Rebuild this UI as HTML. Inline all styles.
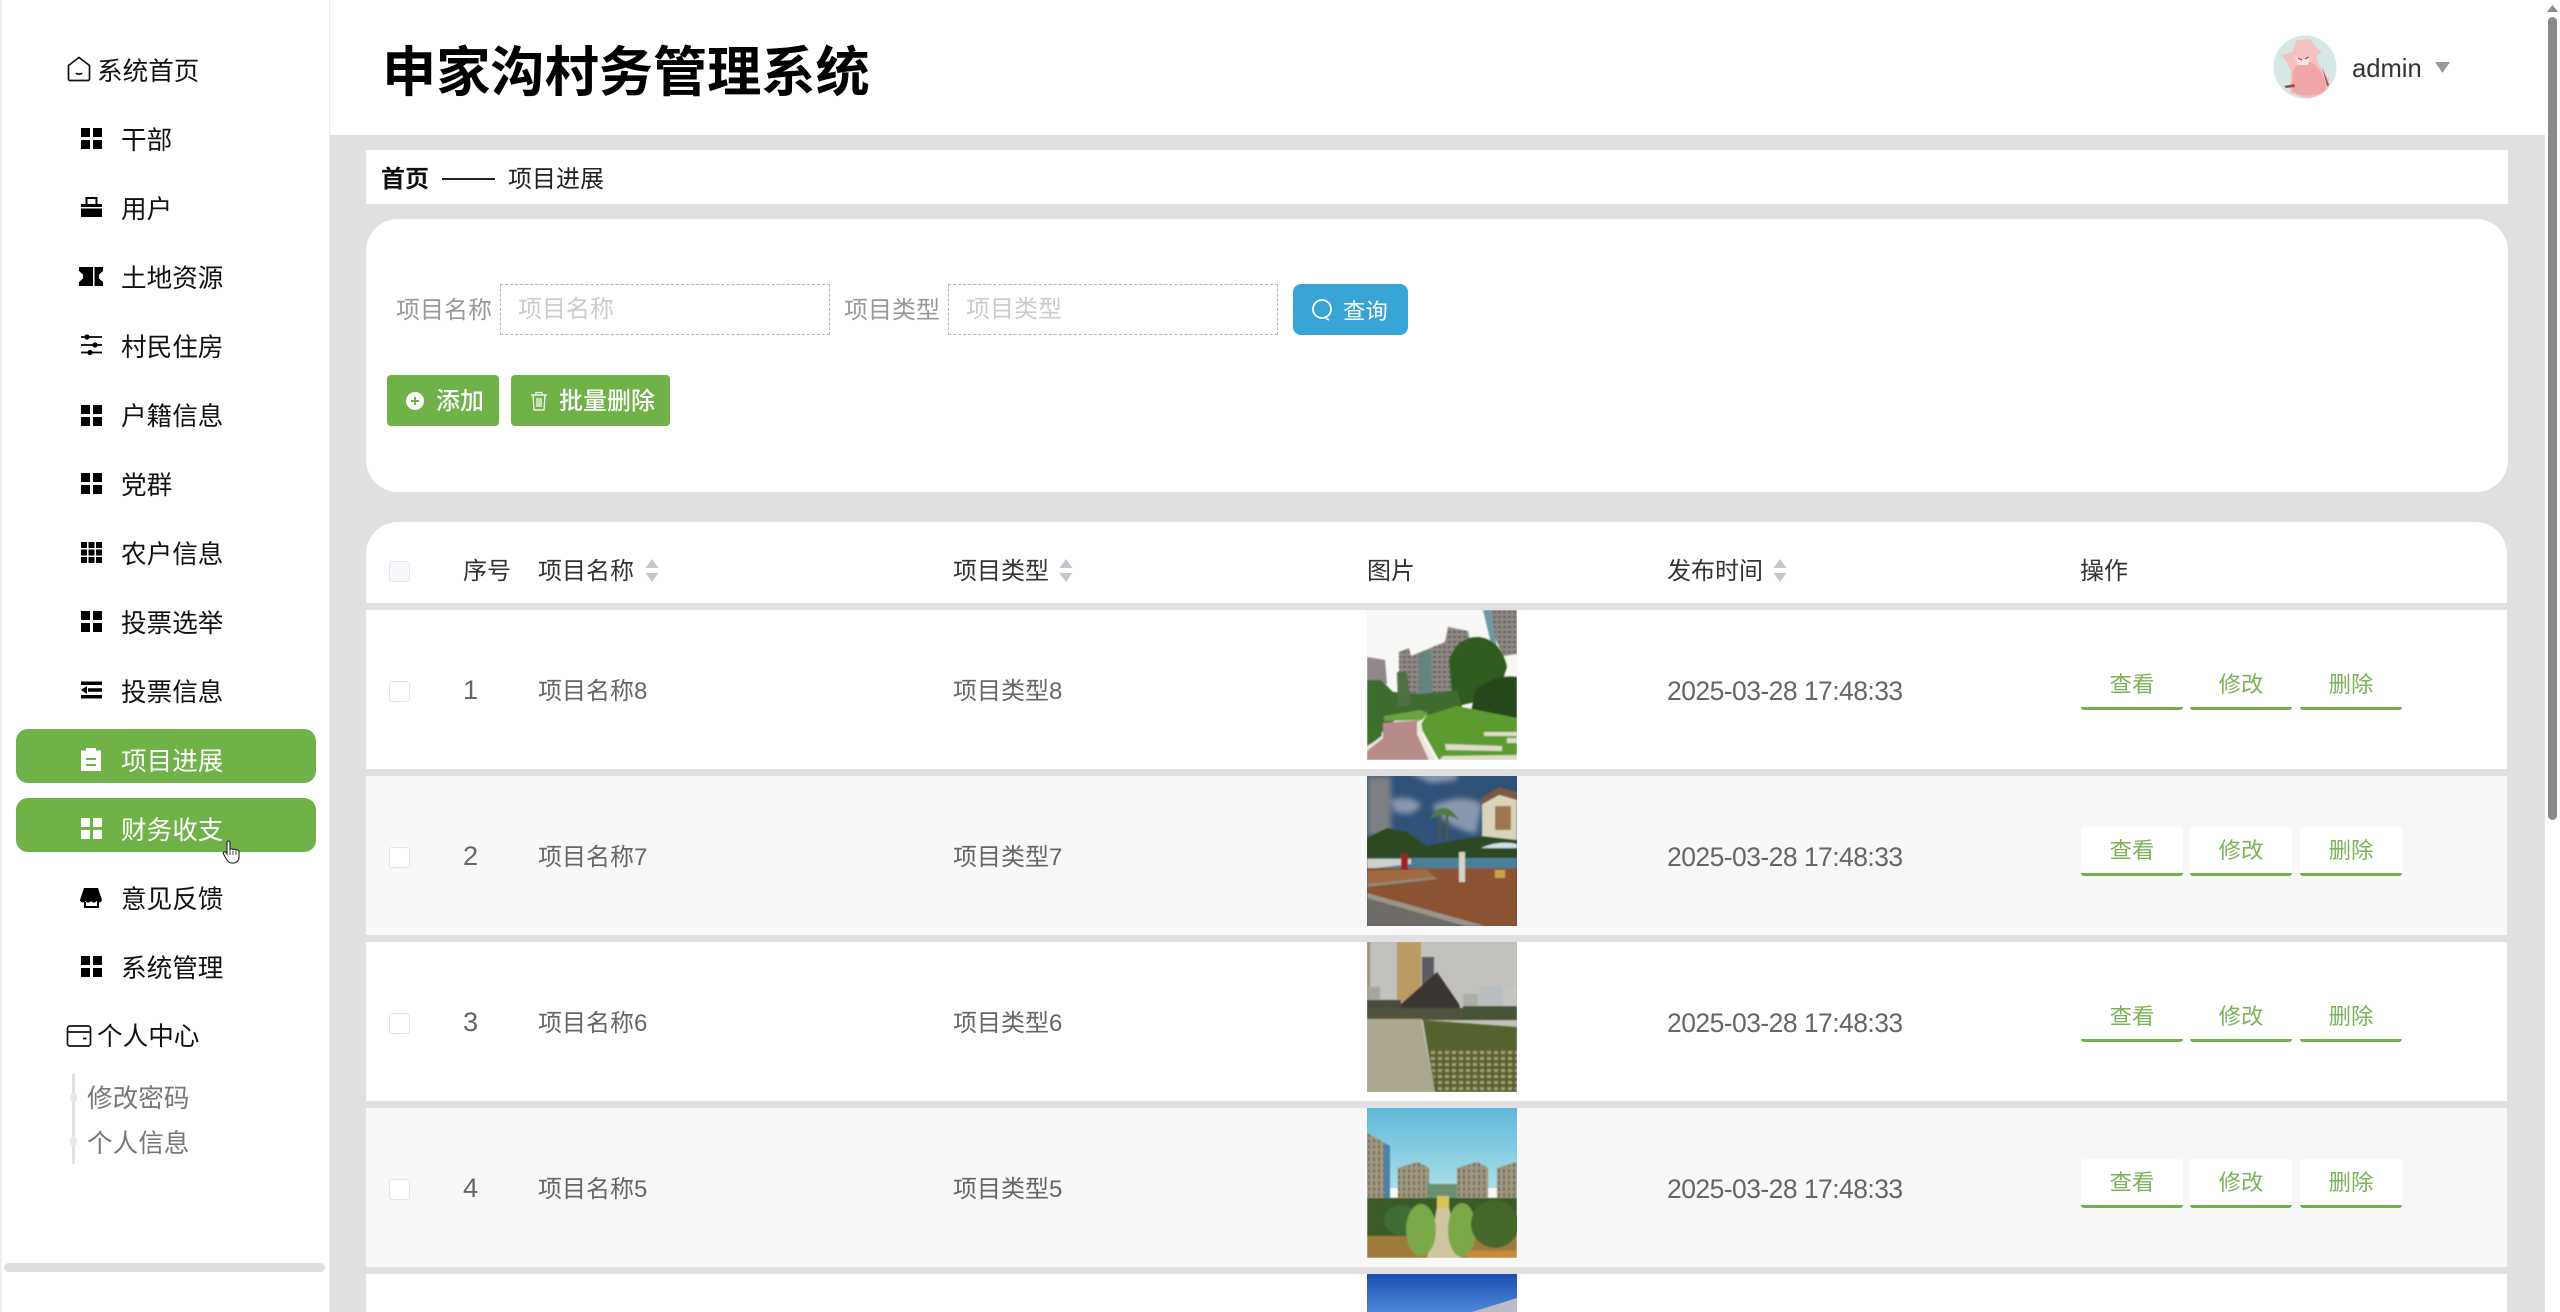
<!DOCTYPE html>
<html lang="zh">
<head>
<meta charset="utf-8">
<title>申家沟村务管理系统</title>
<style>
html,body{margin:0;padding:0;width:2560px;height:1312px;overflow:hidden;background:#e0e0e0}
body{position:relative;font-family:"Liberation Sans","Noto Sans CJK SC",sans-serif}
div,span,svg{position:absolute;box-sizing:border-box}
.t{white-space:nowrap;height:40px;line-height:40px;margin-top:2px}
.m{font-size:25.6px;color:#111}
.g{font-size:24px;color:#666}
.n{font-size:27.2px;color:#666}
.d{font-size:26.5px;letter-spacing:-.55px;color:#666;margin-top:.5px}
.h{font-size:24px;color:#333}
.w{left:366px;width:2141px;height:159px;background:#fff}
.alt{background:#f8f8f8}
.cb{left:389px;width:21px;height:21px;border:1.6px solid #e4e4e4;border-radius:3px;background:#fff}
.op{width:102px;height:49px;border-bottom:3.2px solid #72b04e;border-radius:3px;background:#fff;text-align:center;font-size:22.4px;line-height:48px;color:#7ab35a}
.icon{left:80px;width:22px;height:21px}
</style>
</head>
<body>
<!-- sidebar -->
<div style="left:0;top:0;width:330px;height:1312px;background:#fff;border-left:2px solid #f0f0f0;border-right:1px solid #eee"></div>
<div style="left:16px;top:729px;width:300px;height:54px;background:#6fb348;border-radius:12px"></div>
<div style="left:16px;top:798px;width:300px;height:54px;background:#6fb348;border-radius:12px"></div>

<svg style="left:66px;top:56px" width="26" height="26" viewBox="0 0 26 26" fill="none" stroke="#111" stroke-width="1.7"><path d="M2.500 9.500L13 1.500l10.500 8v13.500a1.500 1.500 0 0 1-1.500 1.500H4a1.500 1.500 0 0 1-1.500-1.500z"/><path d="M10 17c1 1.500 5 1.500 6 0"/></svg>
<div class="t m" style="left:97px;top:50px">系统首页</div>

<svg class="icon" style="top:128px" viewBox="0 0 22 21"><path d="M1 0h9v9H1zM13 0h9v9h-9zM1 12h9v9H1zM13 12h9v9h-9z"/></svg>
<div class="t m" style="left:121px;top:119px">干部</div>

<svg class="icon" style="top:197px" viewBox="0 0 22 21"><path d="M1 7h21v3H1zM1 11.500h21V20H1z"/><path d="M6.500 7V1h10v6" fill="none" stroke="#000" stroke-width="2"/></svg>
<div class="t m" style="left:121px;top:188px">用户</div>

<svg style="left:79px;top:267px" width="24" height="19" viewBox="0 0 24 19"><path d="M0 0h14v19H0v-4l4-3.500v-4L0 4zM15.500 0H24v4l-4 3.500v4l4 3.500v4h-8.500z"/></svg>
<div class="t m" style="left:121px;top:257px">土地资源</div>

<svg class="icon" style="top:334px" viewBox="0 0 22 21"><path d="M1 3h21M1 11h21M1 18.500h21" stroke="#000" stroke-width="1.800"/><circle cx="7" cy="3" r="2.600"/><circle cx="15" cy="11" r="2.600"/><circle cx="10" cy="18.500" r="2.600"/></svg>
<div class="t m" style="left:121px;top:326px">村民住房</div>

<svg class="icon" style="top:405px" viewBox="0 0 22 21"><path d="M1 0h9v9H1zM13 0h9v9h-9zM1 12h9v9H1zM13 12h9v9h-9z"/></svg>
<div class="t m" style="left:121px;top:395px">户籍信息</div>

<svg class="icon" style="top:473px" viewBox="0 0 22 21"><path d="M1 0h9v9H1zM13 0h9v9h-9zM1 12h9v9H1zM13 12h9v9h-9z"/></svg>
<div class="t m" style="left:121px;top:464px">党群</div>

<svg class="icon" style="top:542px" viewBox="0 0 22 21"><path d="M1 0h6v6H1zM8.500 0h6v6h-6zM16 0h6v6h-6zM1 7.500h6v6H1zM8.500 7.500h6v6h-6zM16 7.500h6v6h-6zM1 15h6v6H1zM8.500 15h6v6h-6zM16 15h6v6h-6z"/></svg>
<div class="t m" style="left:121px;top:533px">农户信息</div>

<svg class="icon" style="top:611px" viewBox="0 0 22 21"><path d="M1 0h9v9H1zM13 0h9v9h-9zM1 12h9v9H1zM13 12h9v9h-9z"/></svg>
<div class="t m" style="left:121px;top:602px">投票选举</div>

<svg class="icon" style="top:681px" viewBox="0 0 22 21"><path d="M1 .500h21V4H1zM8 7.200h14v3.600H8zM1 9l6-4v8zM1 14h21v3.500H1z"/></svg>
<div class="t m" style="left:121px;top:671px">投票信息</div>

<svg style="left:80px;top:747px" width="22" height="24" viewBox="0 0 22 24"><path fill="#fff" fill-rule="evenodd" d="M1 3.500h5V1h10v2.500h5V24H1zM6 11v2h10v-2zM6 17v2h10v-2z"/></svg>
<div class="t m" style="left:121px;top:740px;color:#fff">项目进展</div>

<svg class="icon" style="top:818px" viewBox="0 0 22 21"><path fill="#fff" d="M1 0h9v9H1zM13 0h9v9h-9zM1 12h9v9H1zM13 12h9v9h-9z"/></svg>
<div class="t m" style="left:121px;top:809px;color:#fff">财务收支</div>

<svg class="icon" style="top:887px" viewBox="0 0 22 21"><path d="M4 1h14l4 12a3 3 0 0 1-5.500 1 3.200 3.200 0 0 1-5.500 0 3.200 3.200 0 0 1-5.500 0A3 3 0 0 1 0 13z"/><path d="M5 15v5h13v-5" fill="none" stroke="#000" stroke-width="2"/></svg>
<div class="t m" style="left:121px;top:878px">意见反馈</div>

<svg class="icon" style="top:956px" viewBox="0 0 22 21"><path d="M1 0h9v9H1zM13 0h9v9h-9zM1 12h9v9H1zM13 12h9v9h-9z"/></svg>
<div class="t m" style="left:121px;top:947px">系统管理</div>

<svg style="left:66px;top:1025px" width="26" height="22" viewBox="0 0 26 22" fill="none" stroke="#111" stroke-width="1.700"><rect x="1.500" y="1" width="23" height="20" rx="2.500"/><path d="M1.500 7h23M17 13.500h3.500"/></svg>
<div class="t m" style="left:97px;top:1015px">个人中心</div>

<div style="left:72px;top:1074px;width:3px;height:90px;background:#e2e2e2"></div>
<div style="left:70px;top:1092px;width:7px;height:11px;border-radius:50%;background:#e8e8e8"></div>
<div style="left:70px;top:1136px;width:7px;height:11px;border-radius:50%;background:#e8e8e8"></div>
<div class="t m" style="left:87px;top:1077px;color:#777">修改密码</div>
<div class="t m" style="left:87px;top:1122px;color:#777">个人信息</div>
<div style="left:4px;top:1263px;width:321px;height:9px;border-radius:5px;background:#dedede"></div>

<svg style="left:222px;top:840px" width="20" height="24" viewBox="0 0 20 24"><path d="M5 2.500c0-2 3-2 3 0V10c0-1.500 3-1.500 3 0 0-1 3-1 3 .5 0-1 3-.5 3 1V17c0 3-2 6-5.500 6H9.500C7 23 5.500 21 4 18.500L1.500 14c-1-2 1.500-3 2.500-1.500L5 14z" fill="#fff" stroke="#222" stroke-width="1.100"/><path d="M8 10v5M11 10.500V15M14 11v4" stroke="#222" stroke-width=".8"/></svg>

<!-- header -->
<div style="left:330px;top:0;width:2215px;height:134.500px;background:#fff"></div>
<div class="t" style="left:382px;top:41px;height:60px;line-height:60px;font-size:54.200px;font-weight:700;color:#000">申家沟村务管理系统</div>
<svg style="left:2273px;top:35px" width="64" height="64" viewBox="0 0 64 64">
<defs><clipPath id="av"><circle cx="32" cy="32" r="31.500"/></clipPath></defs>
<g clip-path="url(#av)">
<rect width="64" height="64" fill="#d6e7e6"/>
<path d="M8 20L19 17 24 5 37 4 44 14 49 16 43 22 46 30 56 44 56 58 36 64 17 58 18 36 13 26z" fill="#f5c0c2"/>
<path d="M20 36C24 26 36 24 42 30 49 38 54 46 52 56 42 62 26 62 19 56z" fill="#f0a5a6"/>
<path d="M22 21l7 4 8-4-2 9H25z" fill="#fbe6e0"/>
<path d="M49 32l7 18-2 1z" fill="#a05058"/>
<path d="M11 51l10-2 1 3-9 1z" fill="#8a5050"/>
<path d="M25 23l4 2M32 24l4-2" stroke="#9a4a50" stroke-width="1.200"/>
</g></svg>
<div class="t" style="left:2352px;top:47px;font-size:25.600px;color:#333">admin</div>
<svg style="left:2435px;top:62px" width="15" height="11" viewBox="0 0 15 11"><path d="M0 0h15L7.500 11z" fill="#999"/></svg>

<!-- breadcrumb -->
<div style="left:366px;top:150px;width:2142px;height:54px;background:#fff"></div>
<div class="t" style="left:381px;top:158px;font-size:24px;font-weight:700;color:#111">首页</div>
<div style="left:442px;top:178px;width:53px;height:1.600px;background:#222"></div>
<div class="t" style="left:508px;top:158px;font-size:24px;color:#222">项目进展</div>

<!-- search card -->
<div style="left:366px;top:219px;width:2142px;height:273px;background:#fff;border-radius:32px"></div>
<div class="t" style="left:396px;top:289px;font-size:24px;color:#999">项目名称</div>
<div style="left:500px;top:284px;width:330px;height:51px;border:1.600px dashed #b5b5b5"></div>
<div class="t" style="left:518px;top:288px;font-size:24px;color:#ccc">项目名称</div>
<div class="t" style="left:844px;top:289px;font-size:24px;color:#999">项目类型</div>
<div style="left:948px;top:284px;width:330px;height:51px;border:1.600px dashed #b5b5b5"></div>
<div class="t" style="left:966px;top:288px;font-size:24px;color:#ccc">项目类型</div>
<div style="left:1293px;top:284px;width:115px;height:51px;background:#36a5d6;border-radius:8px"></div>
<svg style="left:1311px;top:298px" width="22" height="23" viewBox="0 0 22 23" fill="none" stroke="#fff" stroke-width="1.800"><circle cx="11" cy="11" r="9"/><path d="M15 20.500l3 1.500"/></svg>
<div class="t" style="left:1343px;top:290px;font-size:22.400px;color:#fff">查询</div>

<div style="left:387px;top:375px;width:112px;height:51px;background:#6fb348;border-radius:4px"></div>
<svg style="left:406px;top:392px" width="18" height="18" viewBox="0 0 18 18"><circle cx="9" cy="9" r="9" fill="#fff"/><path d="M9 5v8M5 9h8" stroke="#6fb348" stroke-width="2"/></svg>
<div class="t" style="left:436px;top:379px;font-size:24px;font-weight:500;color:#fff;margin-top:3px">添加</div>
<div style="left:511px;top:375px;width:159px;height:51px;background:#6fb348;border-radius:4px"></div>
<svg style="left:530px;top:391px" width="18" height="20" viewBox="0 0 18 20" fill="none" stroke="#fff" stroke-width="1.200"><path d="M1 4h16M6 4V1.500h6V4M3 4l1 15h10l1-15M7 7v9M9 7v9M11 7v9"/></svg>
<div class="t" style="left:559px;top:379px;font-size:24px;font-weight:500;color:#fff;margin-top:3px">批量删除</div>

<!-- table head -->
<div style="left:366px;top:522px;width:2141px;height:81px;background:#fff;border-radius:32px 32px 0 0"></div>
<div class="cb" style="top:561px;background:#f6f8fc;border-color:#e3e8f0"></div>
<div class="t h" style="left:463px;top:550px">序号</div>
<div class="t h" style="left:538px;top:550px">项目名称</div>
<div class="t h" style="left:953px;top:550px">项目类型</div>
<div class="t h" style="left:1367px;top:550px">图片</div>
<div class="t h" style="left:1667px;top:550px">发布时间</div>
<div class="t h" style="left:2080px;top:550px">操作</div>
<svg style="left:645px;top:559px" width="14" height="23" viewBox="0 0 14 23" fill="#c4c6cc"><path d="M7 0l6.500 9H.5zM7 23l6.500-9H.5z"/></svg>
<svg style="left:1059px;top:559px" width="14" height="23" viewBox="0 0 14 23" fill="#c4c6cc"><path d="M7 0l6.500 9H.5zM7 23l6.500-9H.5z"/></svg>
<svg style="left:1773px;top:559px" width="14" height="23" viewBox="0 0 14 23" fill="#c4c6cc"><path d="M7 0l6.500 9H.5zM7 23l6.500-9H.5z"/></svg>

<!-- rows -->
<div class="w" style="top:610px"></div>
<div class="w alt" style="top:776px"></div>
<div class="w" style="top:942px"></div>
<div class="w alt" style="top:1108px"></div>
<div class="w" style="top:1274px;height:38px"></div>

<div class="cb" style="top:681px"></div>
<div class="t n" style="left:463px;top:668px">1</div>
<div class="t g" style="left:538px;top:670px">项目名称8</div>
<div class="t g" style="left:953px;top:670px">项目类型8</div>
<div class="t d" style="left:1667px;top:670px">2025-03-28 17:48:33</div>
<div class="op" style="left:2081px;top:661px">查看</div><div class="op" style="left:2190px;top:661px">修改</div><div class="op" style="left:2300px;top:661px">删除</div>

<div class="cb" style="top:847px"></div>
<div class="t n" style="left:463px;top:834px">2</div>
<div class="t g" style="left:538px;top:836px">项目名称7</div>
<div class="t g" style="left:953px;top:836px">项目类型7</div>
<div class="t d" style="left:1667px;top:836px">2025-03-28 17:48:33</div>
<div class="op" style="left:2081px;top:827px">查看</div><div class="op" style="left:2190px;top:827px">修改</div><div class="op" style="left:2300px;top:827px">删除</div>

<div class="cb" style="top:1013px"></div>
<div class="t n" style="left:463px;top:1000px">3</div>
<div class="t g" style="left:538px;top:1002px">项目名称6</div>
<div class="t g" style="left:953px;top:1002px">项目类型6</div>
<div class="t d" style="left:1667px;top:1002px">2025-03-28 17:48:33</div>
<div class="op" style="left:2081px;top:993px">查看</div><div class="op" style="left:2190px;top:993px">修改</div><div class="op" style="left:2300px;top:993px">删除</div>

<div class="cb" style="top:1179px"></div>
<div class="t n" style="left:463px;top:1166px">4</div>
<div class="t g" style="left:538px;top:1168px">项目名称5</div>
<div class="t g" style="left:953px;top:1168px">项目类型5</div>
<div class="t d" style="left:1667px;top:1168px">2025-03-28 17:48:33</div>
<div class="op" style="left:2081px;top:1159px">查看</div><div class="op" style="left:2190px;top:1159px">修改</div><div class="op" style="left:2300px;top:1159px">删除</div>

<!-- image 1 -->
<svg style="left:1367px;top:610px" width="150" height="150" viewBox="0 0 150 150">
<defs><filter id="f" x="0" y="0" width="100%" height="100%"><feGaussianBlur stdDeviation=".9"/></filter>
<pattern id="win" width="5" height="5" patternUnits="userSpaceOnUse"><rect width="5" height="5" fill="#8f8884"/><rect x="1" y="1" width="3" height="2" fill="#5f5a58"/></pattern></defs>
<rect width="150" height="150" fill="#f7f7f5"/>
<g filter="url(#f)">
<path d="M116 0h34v44l-14 2z" fill="url(#win)"/><path d="M116 0h8l7 44-4 2z" fill="#6d98a4"/>
<path d="M0 47l18 3 2 24H0z" fill="#8f8789"/>
<path d="M32 42l10-4 2 8 34-14 3-15 20 4 2 12-10 60H32z" fill="url(#win)"/>
<path d="M52 44l12-5 2 55H52z" fill="#64857f"/>
<path d="M82 50q8-24 30-23 22 3 28 30l-10 30-44 10z" fill="#2d5c1f"/>
<path d="M0 70h14l12 12 28 2 36-4 6 20-40 6-22-2-18 18H0z" fill="#3c6c2e"/>
<path d="M30 62h10l4 34H31z" fill="#516e44"/>
<path d="M108 80q20-16 42-13v43l-16 1-30-8z" fill="#25461a"/>
<path d="M90 96l60 12v42H72l-19-34 6-10z" fill="#5b9c2e"/>
<path d="M17 106l36-6 8 3-6 7-38 1z" fill="#6ba23c"/>
<path d="M0 118l14-2 1 12-15 8z" fill="#3f7128"/>
<path d="M16 113l38-3-4 14 12 26H0v-10l16-12z" fill="#b68b8a"/>
<path d="M50 124l12 26h7L56 128l-2-18-4 2zM0 137l16-12v3L0 141z" fill="#ebe7dc"/>
<path d="M117 122h33v4h-33zM78 134l57 2v5l-56-1zM140 128h10v5h-10zM76 146l74-1v5H72z" fill="#dedcc8"/>
</g></svg>
<!-- image 2 -->
<svg style="left:1367px;top:776px" width="150" height="150" viewBox="0 0 150 150">
<defs><filter id="b1"><feGaussianBlur stdDeviation="3"/></filter></defs>
<rect width="150" height="150" fill="#2f5279"/>
<g filter="url(#b1)"><path d="M0 0h24v60H0z" fill="#7f8083"/><path d="M24 24q16-6 30 4-6 14-26 8zM65 30q30-14 50-2l-6 30q-30-6-44-28z" fill="#8b97ad"/><path d="M40-4h50v8l-26 3z" fill="#8b9bb0"/></g>
<g filter="url(#f)">
<path d="M115 24l20-8 15 4v46h-35z" fill="#d9d4bc"/><path d="M114 22l18-11 18 5v8l-18-5-18 10z" fill="#7b5a3f"/><path d="M128 30h16v24h-16z" fill="#9c7650"/>
<path d="M0 62l20-10 20 4 20 14 30-6 25-4 35 4v20H0z" fill="#2e4a24"/>
<path d="M73 65V38M80 65V38" stroke="#5a5a3e" stroke-width="2"/><path d="M62 44q14-24 30 0-16-10-30 0z" fill="#4d7a42"/>
<rect y="82" width="150" height="14" fill="#4a7f98"/>
<path d="M0 83h44v5L0 93z" fill="#cfd2cb"/>
<path d="M114 72q18-8 36-4v4z" fill="#cfe0e6"/>
<path d="M0 92l60 0 68 0h22v58H95L0 120z" fill="#8c5231"/>
<path d="M0 95l60-2 8 9-68 6z" fill="#a26b42"/><path d="M0 108l68-7 2 2-70 8z" fill="#8c8a7c"/>
<path d="M0 120l96 30H0z" fill="#6e6a66"/><path d="M0 117l118 33h-20L0 122z" fill="#99958b"/>
<rect x="34" y="78" width="7" height="16" fill="#9e2420"/>
<rect x="92" y="76" width="6" height="30" fill="#d6d2c6"/>
<rect x="128" y="94" width="10" height="8" fill="#c9a544"/>
</g></svg>
<!-- image 3 -->
<svg style="left:1367px;top:942px" width="150" height="150" viewBox="0 0 150 150">
<defs><pattern id="ck" width="7" height="6" patternUnits="userSpaceOnUse"><rect width="7" height="6" fill="#5a6132"/><rect x="1" y="1" width="4" height="3" fill="#a3a070"/></pattern></defs>
<rect width="150" height="150" fill="#c2c1bd"/>
<g filter="url(#f)">
<rect x="30" y="0" width="24" height="60" fill="#b79c64"/>
<rect x="55" y="15" width="12" height="30" fill="#5b5d63"/>
<rect y="0" width="3" height="60" fill="#9c8f78"/><rect x="1" y="45" width="12" height="25" fill="#a6a49e"/>
<rect x="113" y="44" width="22" height="32" fill="#b9bdbf"/><rect x="136" y="46" width="14" height="28" fill="#c3c5c2"/><rect x="96" y="52" width="15" height="24" fill="#aeb0a8"/>
<path d="M34 62L70 30l22 32 3 12H34z" fill="#3b3530"/>
<rect y="58" width="34" height="14" fill="#4c4c40"/>
<rect y="66" width="150" height="12" fill="#4f5240"/>
<path d="M96 64h54v14H96z" fill="#465234"/>
<path d="M0 77h56l-2 1 14 72H0z" fill="#aba78f"/>
<path d="M56 78l94 7v65H68z" fill="#56622e"/>
<path d="M62 108h88v42H69z" fill="url(#ck)"/>
</g></svg>
<!-- image 4 -->
<svg style="left:1367px;top:1108px" width="150" height="150" viewBox="0 0 150 150">
<defs><linearGradient id="s4" x1="0" y1="0" x2="0" y2="1"><stop offset="0" stop-color="#5fb8d8"/><stop offset="1" stop-color="#a9dfe9"/></linearGradient>
<pattern id="w4" width="5" height="6" patternUnits="userSpaceOnUse"><rect width="5" height="6" fill="#a09880"/><rect x="1" y="1" width="2" height="4" fill="#6e6a5a"/></pattern></defs>
<rect width="150" height="80" fill="url(#s4)"/>
<g filter="url(#f)">
<path d="M0 25l23 13v56H0z" fill="url(#w4)"/><path d="M17 35l6 3v52h-6z" fill="#4e7fa8"/>
<path d="M31 60l20-6 11 6v36H31z" fill="url(#w4)"/>
<path d="M90 60l20-6 11 6v36H90z" fill="url(#w4)"/>
<path d="M130 60l20-6v42h-20z" fill="url(#w4)"/>
<rect y="76" x="60" width="30" height="14" fill="#6a9070"/>
<rect y="90" width="150" height="60" fill="#3b5a26"/>
<rect x="70" y="88" width="12" height="12" fill="#d7c45a"/>
<path d="M0 128h150v22H0z" fill="#a07a3c"/>
<path d="M70 100h12l12 50H60z" fill="#cfc6a0"/>
<ellipse cx="34" cy="112" rx="17" ry="15" fill="#3f6d30"/>
<ellipse cx="54" cy="122" rx="15" ry="26" fill="#7aa846"/>
<ellipse cx="95" cy="122" rx="14" ry="27" fill="#7aa846"/>
<ellipse cx="128" cy="116" rx="24" ry="24" fill="#44682c"/>
<path d="M100 143h50v7h-50z" fill="#c88a35"/>
</g></svg>
<!-- image 5 -->
<svg style="left:1367px;top:1274px" width="150" height="38" viewBox="0 0 150 38">
<defs><linearGradient id="s5" x1="0" y1="0" x2="0" y2="1"><stop offset="0" stop-color="#1a4fb4"/><stop offset="1" stop-color="#4e88d8"/></linearGradient></defs>
<rect width="150" height="38" fill="url(#s5)"/>
<path d="M105 38l45-14v14z" fill="#b9bcc4"/>
</svg>

<!-- page scrollbar -->
<div style="left:2545px;top:0;width:15px;height:1312px;background:#fff"></div>
<svg style="left:2547px;top:5px" width="11" height="7" viewBox="0 0 11 7"><path d="M5.500 0L11 7H0z" fill="#8a8a8a"/></svg>
<div style="left:2548px;top:17px;width:9px;height:803px;background:#8a8a8a;border-radius:5px"></div>
</body>
</html>
